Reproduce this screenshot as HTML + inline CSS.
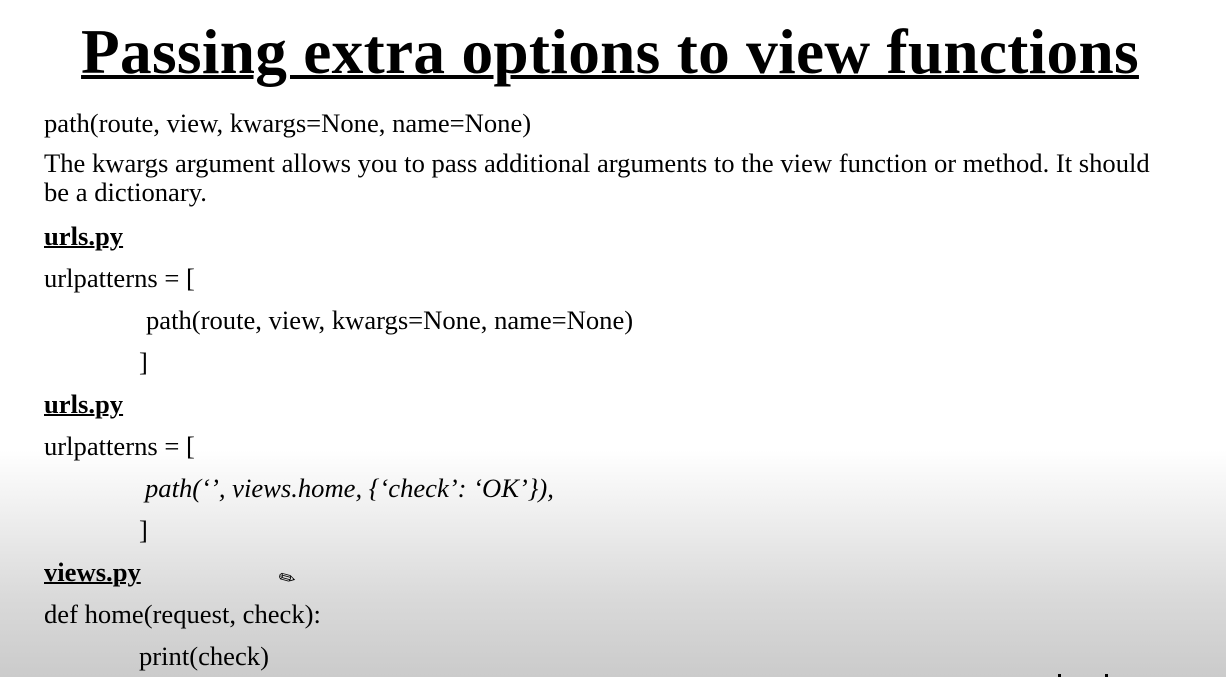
<!DOCTYPE html>
<html><head><style>
html,body{margin:0;padding:0}
body{width:1226px;height:677px;overflow:hidden;position:relative;font-family:"Liberation Serif",serif;color:#000;
background:linear-gradient(to bottom,#fff 0px,#fff 450px,#ececec 525px,#d9d9d9 600px,#cbcbcb 677px);}
.l{position:absolute;left:44px;font-size:26.6px;line-height:30px;white-space:nowrap}
.b{font-weight:bold;text-decoration:underline;text-decoration-thickness:2px}
h1{position:absolute;left:0;width:1220px;text-align:center;top:14px;margin:0;font-size:63.3px;line-height:76px;font-weight:bold;text-decoration:underline;text-decoration-thickness:4px;letter-spacing:0.3px}
</style></head><body>
<h1>Passing extra options to view functions</h1>
<div class="l" style="top:108px">path(route, view, kwargs=None, name=None)</div>
<div class="l" style="top:148px">The kwargs argument allows you to pass additional arguments to the view function or method. It should</div>
<div class="l" style="top:177px">be a dictionary.</div>
<div class="l b" style="top:221px">urls.py</div>
<div class="l" style="top:263px">urlpatterns = [</div>
<div class="l" style="top:305px;left:146px">path(route, view, kwargs=None, name=None)</div>
<div class="l" style="top:347px;left:139px">]</div>
<div class="l b" style="top:389px">urls.py</div>
<div class="l" style="top:431px">urlpatterns = [</div>
<div class="l" style="top:473px;left:145px;font-style:italic">path(‘’, views.home, {‘check’: ‘OK’}),</div>
<div class="l" style="top:515px;left:139px">]</div>
<div class="l b" style="top:557px">views.py</div>
<div style="position:absolute;left:279px;top:566px;font-size:20px;transform:rotate(-30deg)">✎</div>
<div class="l" style="top:599px">def home(request, check):</div>
<div class="l" style="top:641px;left:139px">print(check)</div>
<div style="position:absolute;left:1058px;top:674px;width:3px;height:3px;background:#000"></div>
<div style="position:absolute;left:1105px;top:674px;width:3px;height:3px;background:#000"></div>
</body></html>
